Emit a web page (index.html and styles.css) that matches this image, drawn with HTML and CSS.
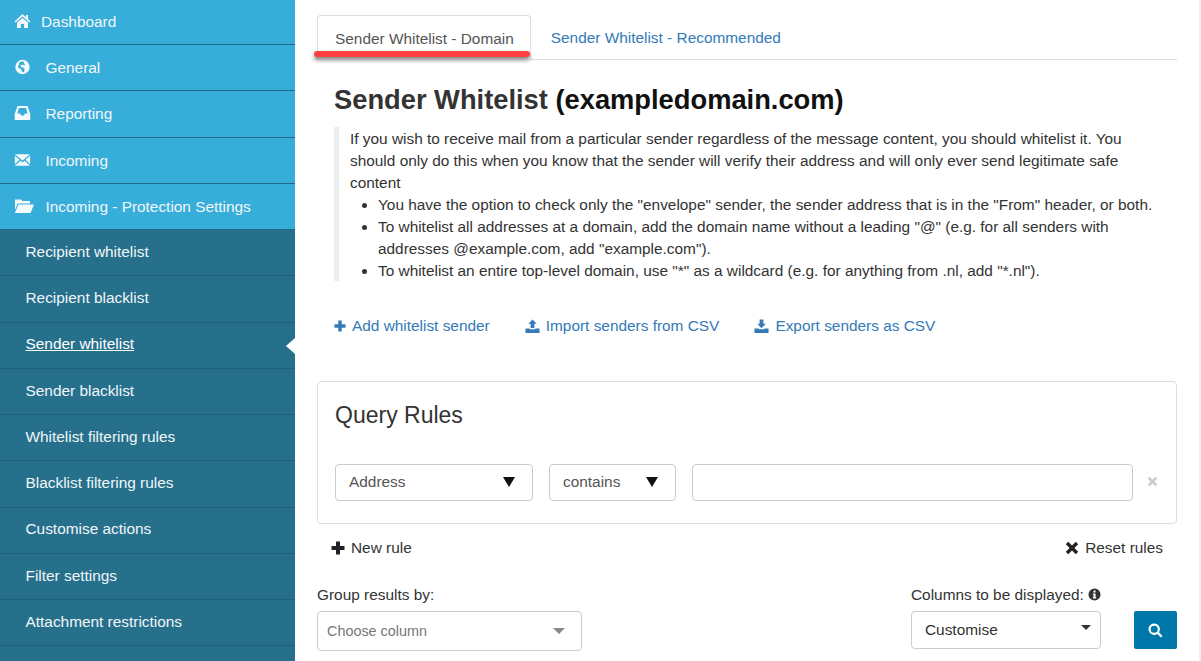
FILE: index.html
```html
<!DOCTYPE html>
<html lang="en">
<head>
    <meta charset="UTF-8">
    <meta name="viewport" content="width=device-width, initial-scale=1.0">
    <title>Sender Whitelist</title>
    <link rel="stylesheet" href="styles.css">
</head>
<body>

    <svg class="icon-defs" width="0" height="0">
        <symbol id="i-home" viewBox="0 0 16 16"><path d="M8 1 L11.5 4.2 V2 H13.5 V6 L16 8.4 L15 9.4 L8 3.4 L1 9.4 L0 8.4 Z M2.5 9.6 L8 4.9 L13.5 9.6 V15 H9.6 V11 H6.4 V15 H2.5 Z"/></symbol>
        <symbol id="i-globe" viewBox="0 0 16 16"><path fill-rule="evenodd" d="M8 .8 A7.2 7.2 0 1 1 8 15.2 A7.2 7.2 0 0 1 8 .8 Z M6.4 2.6 L4.4 4 L5 5.4 L3.4 6.6 L4 9 L6.6 10 L7.6 12.8 L9.4 13.2 L10.2 10.6 L8.6 8.6 L6.4 8 L6 6.4 L8 5.6 L9.6 6.6 L10.6 5.2 L9.2 4.2 L9.8 2.8 Z"/></symbol>
        <symbol id="i-tray" viewBox="0 0 16 16"><path fill-rule="evenodd" d="M3 1 H13 L15.8 9 V15 H.2 V9 Z M4.4 3 L2.9 8.6 H5.6 L6.6 10.6 H9.4 L10.4 8.6 H13.1 L11.6 3 Z"/></symbol>
        <symbol id="i-mail" viewBox="0 0 16 16"><path d="M.4 2.2 H15.6 L8 8.6 Z M.4 3.8 L5 7.8 L.4 12.2 Z M15.6 3.8 V12.2 L11 7.8 Z M.4 13.8 L6 8.8 L8 10.4 L10 8.8 L15.6 13.8 Z"/></symbol>
        <symbol id="i-folder" viewBox="0 0 20 16"><path d="M1 1.5 H7 L8.5 3 H16 V5.4 H3.6 L1 12 Z M4.4 6.5 H20 L16.5 15 H.8 Z"/></symbol>
        <symbol id="i-plus" viewBox="0 0 14 14"><path d="M5 .5 H9 V5 H13.5 V9 H9 V13.5 H5 V9 H.5 V5 H5 Z"/></symbol>
        <symbol id="i-import" viewBox="0 0 16 16"><path fill-rule="evenodd" d="M8 .5 L12.5 5 H10 V9.5 H6 V5 H3.5 Z M.5 10 H5 V11 H11 V10 H15.5 V15 H.5 Z"/></symbol>
        <symbol id="i-export" viewBox="0 0 16 16"><path fill-rule="evenodd" d="M6 .5 H10 V5 H12.5 L8 9.8 L3.5 5 H6 Z M.5 10 H5 V11 H11 V10 H15.5 V15 H.5 Z"/></symbol>
        <symbol id="i-remove" viewBox="0 0 14 14"><path d="M3.2 .8 L7 4.6 L10.8 .8 L13.2 3.2 L9.4 7 L13.2 10.8 L10.8 13.2 L7 9.4 L3.2 13.2 L.8 10.8 L4.6 7 L.8 3.2 Z"/></symbol>
        <symbol id="i-info" viewBox="0 0 14 14"><path fill-rule="evenodd" d="M7 .5 A6.5 6.5 0 1 1 7 13.5 A6.5 6.5 0 0 1 7 .5 Z M5.9 2.6 V4.8 H8.1 V2.6 Z M5.2 5.8 V7 H5.9 V10 H5.2 V11.2 H8.8 V10 H8.1 V5.8 Z"/></symbol>
        <symbol id="i-search" viewBox="0 0 14 14"><path fill-rule="evenodd" d="M5.8 .5 A5.3 5.3 0 0 1 10.2 8.7 L13.6 12.1 L12.1 13.6 L8.7 10.2 A5.3 5.3 0 1 1 5.8 .5 Z M5.8 2.5 A3.3 3.3 0 1 0 5.8 9.1 A3.3 3.3 0 0 0 5.8 2.5 Z"/></symbol>
    </svg>

    <div class="page">
        <nav class="sidebar">
            <a class="nav-item nav-dashboard"><svg class="nav-icon"><use href="#i-home"/></svg>Dashboard</a>
            <a class="nav-item"><svg class="nav-icon"><use href="#i-globe"/></svg>General</a>
            <a class="nav-item"><svg class="nav-icon"><use href="#i-tray"/></svg>Reporting</a>
            <a class="nav-item"><svg class="nav-icon"><use href="#i-mail"/></svg>Incoming</a>
            <a class="nav-item"><svg class="nav-icon nav-icon-wide"><use href="#i-folder"/></svg>Incoming - Protection Settings</a>
            <div class="subnav">
                <a class="sub-item">Recipient whitelist</a>
                <a class="sub-item">Recipient blacklist</a>
                <a class="sub-item active"><span>Sender whitelist</span></a>
                <a class="sub-item">Sender blacklist</a>
                <a class="sub-item">Whitelist filtering rules</a>
                <a class="sub-item">Blacklist filtering rules</a>
                <a class="sub-item">Customise actions</a>
                <a class="sub-item">Filter settings</a>
                <a class="sub-item">Attachment restrictions</a>
            </div>
        </nav>

        <main class="content">
            <div class="tabs">
                <a class="tab tab-active">Sender Whitelist - Domain</a>
                <a class="tab">Sender Whitelist - Recommended</a>
                <div class="tab-marker"></div>
            </div>

            <div class="intro">
                <h1>Sender Whitelist <b>(exampledomain.com)</b></h1>
                <div class="note">
                    If you wish to receive mail from a particular sender regardless of the message content, you should whitelist it. You should only do this when you know that the sender will verify their address and will only ever send legitimate safe content
                    <ul>
                        <li>You have the option to check only the "envelope" sender, the sender address that is in the "From" header, or both.</li>
                        <li>To whitelist all addresses at a domain, add the domain name without a leading "@" (e.g. for all senders with addresses @example.com, add "example.com").</li>
                        <li>To whitelist an entire top-level domain, use "*" as a wildcard (e.g. for anything from .nl, add "*.nl").</li>
                    </ul>
                </div>
                <div class="actions">
                    <a class="action"><svg class="action-icon action-icon-plus"><use href="#i-plus"/></svg>Add whitelist sender</a>
                    <a class="action"><svg class="action-icon"><use href="#i-import"/></svg>Import senders from CSV</a>
                    <a class="action"><svg class="action-icon"><use href="#i-export"/></svg>Export senders as CSV</a>
                </div>
            </div>

            <section class="query-panel">
                <h2>Query Rules</h2>
                <div class="rule-row">
                    <div class="rule-select rule-field"><span>Address</span><i class="arrow-big"></i></div>
                    <div class="rule-select rule-op"><span>contains</span><i class="arrow-big"></i></div>
                    <div class="rule-input"></div>
                    <svg class="rule-remove"><use href="#i-remove"/></svg>
                </div>
            </section>

            <div class="rule-links">
                <a class="rule-link"><svg class="link-icon"><use href="#i-plus"/></svg>New rule</a>
                <a class="rule-link"><svg class="link-icon"><use href="#i-remove"/></svg>Reset rules</a>
            </div>

            <div class="filters">
                <div class="group-by">
                    <label>Group results by:</label>
                    <div class="choose"><span>Choose column</span><i class="arrow-grey"></i></div>
                </div>
                <div class="columns">
                    <label>Columns to be displayed: <svg class="info-icon"><use href="#i-info"/></svg></label>
                    <div class="customise"><span>Customise</span><i class="arrow-small"></i></div>
                </div>
                <button class="search-btn"><svg class="search-icon"><use href="#i-search"/></svg></button>
            </div>
        </main>

        <div class="scroll-edge"></div>
    </div>

</body>
</html>
```

FILE: styles.css
```css
html, body {
    margin: 0;
    height: 100%;
    overflow: hidden;
}

body {
    font-family: "Liberation Sans", Arial, sans-serif;
    font-size: 15.4px;
    color: #333;
    background-color: #fff;
}

.icon-defs {
    position: absolute;
}

.page {
    display: flex;
    height: 661px;
}

.scroll-edge {
    width: 2px;
    flex: none;
    margin-left: auto;
    background-color: #f0f0f0;
}

/* sidebar */
.sidebar {
    width: 295px;
    flex: none;
    margin-top: -1.25px;
    background-color: #26708c;
    color: #f1f6f9;
}

.nav-item {
    box-sizing: border-box;
    display: flex;
    align-items: center;
    height: 46.25px;
    border-bottom: 1px solid #1f6a88;
    background-color: #37aed9;
    padding: 1px 0 0 14px;
}

.nav-icon {
    width: 17px;
    height: 16px;
    fill: #f4f9fc;
    margin-right: 14.5px;
    margin-top: -2px;
}

.nav-icon-wide {
    width: 20px;
    margin-right: 11.5px;
}

.nav-dashboard .nav-icon {
    margin-right: 10px;
}

.sub-item {
    box-sizing: border-box;
    display: flex;
    align-items: center;
    position: relative;
    height: 46.25px;
    border-bottom: 1px solid #1f6078;
    padding: 0 0 1.5px 25.5px;
}

.sub-item.active span {
    color: #fff;
    text-decoration: underline;
}

.sub-item.active::after {
    content: "";
    position: absolute;
    right: 0;
    top: 15px;
    border: 8px solid transparent;
    border-left-width: 0;
    border-right: 9px solid #fff;
}

/* main column */
.content {
    flex: none;
    width: 860px;
    margin-left: 22px;
    padding-top: 15px;
}

.tabs {
    display: flex;
    position: relative;
    height: 44px;
    border-bottom: 1px solid #ddd;
}

.tab {
    padding: 14px 17px 0;
    height: 30px;
    color: #337ab7;
    margin-right: 3px;
}

.tab-active {
    color: #555;
    background-color: #fff;
    border: 1px solid #ddd;
    border-bottom: none;
    border-radius: 4px 4px 0 0;
    height: 30px;
    padding-right: 16px;
}

.tab-marker {
    position: absolute;
    left: -3px;
    top: 36px;
    width: 216px;
    height: 6px;
    border-radius: 3px;
    background-color: #ff4040;
    box-shadow: 0 3px 4px rgba(0, 0, 0, 0.5);
}

.intro {
    padding-left: 17px;
}

h1 {
    font-size: 27.3px;
    line-height: 30px;
    font-weight: bold;
    margin: 25px 0 12px;
    color: #333;
}

h1 b {
    color: #111;
}

.note {
    border-left: 5px solid #eee;
    padding: 1px 0 0 11px;
    margin-right: 8px;
    line-height: 22px;
    height: 153px;
}

.note ul {
    margin: 0;
    padding-left: 28px;
}

.actions {
    display: flex;
    gap: 35px;
    margin-top: 32px;
    height: 24px;
    align-items: center;
}

.action {
    display: flex;
    align-items: center;
    color: #337ab7;
    padding-top: 2px;
}

.action-icon {
    width: 15px;
    height: 15px;
    fill: #337ab7;
    margin-right: 6px;
}

.action-icon-plus {
    width: 12px;
    height: 12px;
}

/* query builder */
.query-panel {
    box-sizing: border-box;
    height: 143px;
    margin-top: 44px;
    border: 1px solid #ddd;
    border-radius: 4px;
    padding: 0 17px;
}

h2 {
    font-size: 23px;
    font-weight: normal;
    line-height: 26px;
    margin: 20px 0 36px;
    color: #333;
}

.rule-row {
    display: flex;
    align-items: center;
    gap: 16px;
}

.rule-row > * {
    flex: none;
}

.rule-select,
.rule-input,
.choose,
.customise {
    box-sizing: border-box;
    border: 1px solid #ccc;
    border-radius: 4px;
    display: flex;
    align-items: center;
    justify-content: space-between;
}

.rule-select {
    height: 37px;
    padding: 0 17px 2px 13px;
    color: #555;
}

.rule-field {
    width: 198px;
}

.rule-op {
    width: 127px;
}

.rule-input {
    width: 441px;
    height: 37px;
}

.rule-remove {
    width: 11px;
    height: 11px;
    fill: #ccc;
    margin-left: -2px;
    margin-top: -3px;
}

.arrow-big {
    border-left: 6.5px solid transparent;
    border-right: 6.5px solid transparent;
    border-top: 10px solid #111;
}

.rule-links {
    display: flex;
    justify-content: space-between;
    padding: 10px 14px 0;
    height: 28px;
}

.rule-link {
    display: flex;
    align-items: center;
    color: #333;
}

.link-icon {
    width: 14px;
    height: 14px;
    fill: #222;
    margin-right: 6px;
}

/* bottom filters */
.filters {
    display: flex;
    margin-top: 22px;
}

.group-by {
    width: 594px;
}

.columns {
    width: 223px;
}

label {
    display: block;
    line-height: 22px;
    margin-bottom: 5px;
}

.info-icon {
    width: 13px;
    height: 13px;
    fill: #333;
    vertical-align: -1px;
}

.choose {
    width: 265px;
    height: 40px;
    padding: 0 16px 0 9px;
    color: #777;
    font-size: 14.4px;
}

.arrow-grey {
    border-left: 6.5px solid transparent;
    border-right: 6.5px solid transparent;
    border-top: 6px solid #888;
}

.customise {
    width: 190px;
    height: 38px;
    padding: 0 9px 1px 13px;
}

.arrow-small {
    border-left: 5px solid transparent;
    border-right: 5px solid transparent;
    border-top: 5px solid #333;
    margin-top: -4px;
}

.search-btn {
    width: 43px;
    height: 38px;
    margin-top: 27px;
    padding: 0;
    border: none;
    border-radius: 2px;
    background-color: #0077aa;
    display: flex;
    align-items: center;
    justify-content: center;
}

.search-icon {
    width: 15px;
    height: 15px;
    fill: #fff;
}
```
